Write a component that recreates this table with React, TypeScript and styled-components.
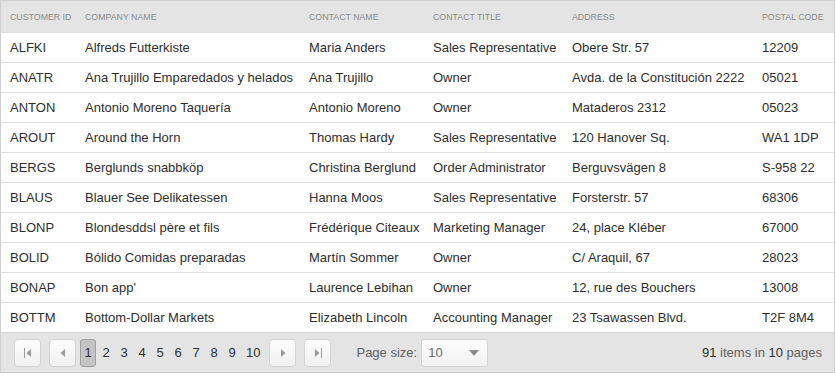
import React from "react";
import styled, { createGlobalStyle } from "styled-components";

type Customer = {
  id: string;
  company: string;
  contact: string;
  title: string;
  address: string;
  postal: string;
};

const customers: Customer[] = [
  { id: "ALFKI", company: "Alfreds Futterkiste", contact: "Maria Anders", title: "Sales Representative", address: "Obere Str. 57", postal: "12209" },
  { id: "ANATR", company: "Ana Trujillo Emparedados y helados", contact: "Ana Trujillo", title: "Owner", address: "Avda. de la Constitución 2222", postal: "05021" },
  { id: "ANTON", company: "Antonio Moreno Taquería", contact: "Antonio Moreno", title: "Owner", address: "Mataderos 2312", postal: "05023" },
  { id: "AROUT", company: "Around the Horn", contact: "Thomas Hardy", title: "Sales Representative", address: "120 Hanover Sq.", postal: "WA1 1DP" },
  { id: "BERGS", company: "Berglunds snabbköp", contact: "Christina Berglund", title: "Order Administrator", address: "Berguvsvägen 8", postal: "S-958 22" },
  { id: "BLAUS", company: "Blauer See Delikatessen", contact: "Hanna Moos", title: "Sales Representative", address: "Forsterstr. 57", postal: "68306" },
  { id: "BLONP", company: "Blondesddsl père et fils", contact: "Frédérique Citeaux", title: "Marketing Manager", address: "24, place Kléber", postal: "67000" },
  { id: "BOLID", company: "Bólido Comidas preparadas", contact: "Martín Sommer", title: "Owner", address: "C/ Araquil, 67", postal: "28023" },
  { id: "BONAP", company: "Bon app'", contact: "Laurence Lebihan", title: "Owner", address: "12, rue des Bouchers", postal: "13008" },
  { id: "BOTTM", company: "Bottom-Dollar Markets", contact: "Elizabeth Lincoln", title: "Accounting Manager", address: "23 Tsawassen Blvd.", postal: "T2F 8M4" },
];

const columns = [
  { title: "Customer ID", width: 75 },
  { title: "Company Name", width: 224 },
  { title: "Contact Name", width: 124 },
  { title: "Contact Title", width: 139 },
  { title: "Address", width: 190 },
  { title: "Postal Code", width: 81 },
];

const GlobalStyle = createGlobalStyle`
  body {
    margin: 0;
    background: #ffffff;
    font-family: "Liberation Sans", Arial, sans-serif;
  }
`;

const Grid = styled.div`
  width: 835px;
  border: 1px solid #d0d0d0;
  border-bottom-color: #c8c8c8;
  box-sizing: border-box;
  color: #2e2e2e;
`;

const Table = styled.table`
  width: 100%;
  border-collapse: collapse;
  table-layout: fixed;
`;

const HeadCell = styled.th`
  height: 31px;
  padding: 0 9px;
  background: #e4e4e4;
  color: #8a8a8a;
  font-size: 8.8px;
  font-weight: normal;
  text-align: left;
  text-transform: uppercase;
  white-space: nowrap;
  overflow: hidden;
`;

const Row = styled.tr`
  border-top: 1px solid #e0e0e0;
`;

const Cell = styled.td`
  height: 29px;
  padding: 0 9px;
  font-size: 13px;
  white-space: nowrap;
  overflow: hidden;
`;

const Pager = styled.div`
  display: flex;
  align-items: center;
  height: 39px;
  padding: 0 12px 0 13px;
  background: #e4e4e4;
  border-top: 1px solid #d6d6d6;
  font-size: 13px;
`;

const NavButton = styled.span<{ $gap: number }>`
  display: flex;
  align-items: center;
  justify-content: center;
  width: 27px;
  height: 28px;
  box-sizing: border-box;
  margin-right: ${(p) => p.$gap}px;
  border: 1px solid #d3d3d3;
  border-radius: 4px;
  background: linear-gradient(#fdfdfd, #f0f0f0);
  color: #9a9a9a;
`;

const Numbers = styled.div`
  display: flex;
  gap: 2px;
  margin-right: 5px;
`;

const PageLink = styled.span<{ $selected?: boolean }>`
  display: flex;
  align-items: center;
  justify-content: center;
  min-width: 16px;
  height: 28px;
  padding: 0 3px;
  box-sizing: border-box;
  border-radius: 3px;
  color: #2e2e2e;
  border: 1px solid ${(p) => (p.$selected ? "#a0a0a0" : "transparent")};
  background: ${(p) => (p.$selected ? "#c4c4c4" : "transparent")};
`;

const SizeLabel = styled.span`
  margin-left: 25px;
  margin-right: 4px;
  color: #5f5f5f;
`;

const Dropdown = styled.span`
  display: flex;
  align-items: center;
  justify-content: space-between;
  width: 67px;
  height: 28px;
  padding: 0 8px 0 6px;
  box-sizing: border-box;
  border: 1px solid #d3d3d3;
  border-radius: 3px;
  background: linear-gradient(#fdfdfd, #f2f2f2);
  color: #6a6a6a;
`;

const Info = styled.span`
  margin-left: auto;
  color: #5f5f5f;
  b {
    font-weight: normal;
    color: #2e2e2e;
  }
`;

const Icon = ({ dir, bar }: { dir: "left" | "right"; bar?: boolean }) => (
  <svg width="10" height="10" viewBox="0 0 10 10">
    {dir === "left" ? (
      <>
        {bar && <rect x="1" y="0" width="1" height="10" fill="currentColor" />}
        <polygon points={bar ? "8,1 3.5,5 8,9" : "7,1 2.5,5 7,9"} fill="currentColor" />
      </>
    ) : (
      <>
        <polygon points={bar ? "2,1 6.5,5 2,9" : "3,1 7.5,5 3,9"} fill="currentColor" />
        {bar && <rect x="8" y="0" width="1" height="10" fill="currentColor" />}
      </>
    )}
  </svg>
);

export default function App() {
  const pages = Array.from({ length: 10 }, (_, i) => i + 1);

  return (
    <>
      <GlobalStyle />
      <Grid>
        <Table>
          <colgroup>
            {columns.map((c) => (
              <col key={c.title} style={{ width: c.width }} />
            ))}
          </colgroup>
          <thead>
            <tr>
              {columns.map((c) => (
                <HeadCell key={c.title}>{c.title}</HeadCell>
              ))}
            </tr>
          </thead>
          <tbody>
            {customers.map((c) => (
              <Row key={c.id}>
                <Cell>{c.id}</Cell>
                <Cell>{c.company}</Cell>
                <Cell>{c.contact}</Cell>
                <Cell>{c.title}</Cell>
                <Cell>{c.address}</Cell>
                <Cell>{c.postal}</Cell>
              </Row>
            ))}
          </tbody>
        </Table>
        <Pager>
          <NavButton $gap={8}>
            <Icon dir="left" bar />
          </NavButton>
          <NavButton $gap={4}>
            <Icon dir="left" />
          </NavButton>
          <Numbers>
            {pages.map((n) => (
              <PageLink key={n} $selected={n === 1}>
                {n}
              </PageLink>
            ))}
          </Numbers>
          <NavButton $gap={8}>
            <Icon dir="right" />
          </NavButton>
          <NavButton $gap={0}>
            <Icon dir="right" bar />
          </NavButton>
          <SizeLabel>Page size:</SizeLabel>
          <Dropdown>
            10
            <svg width="10" height="6" viewBox="0 0 10 6">
              <polygon points="0,0 10,0 5,6" fill="#8a8a8a" />
            </svg>
          </Dropdown>
          <Info>
            <b>91</b> items in <b>10</b> pages
          </Info>
        </Pager>
      </Grid>
    </>
  );
}
